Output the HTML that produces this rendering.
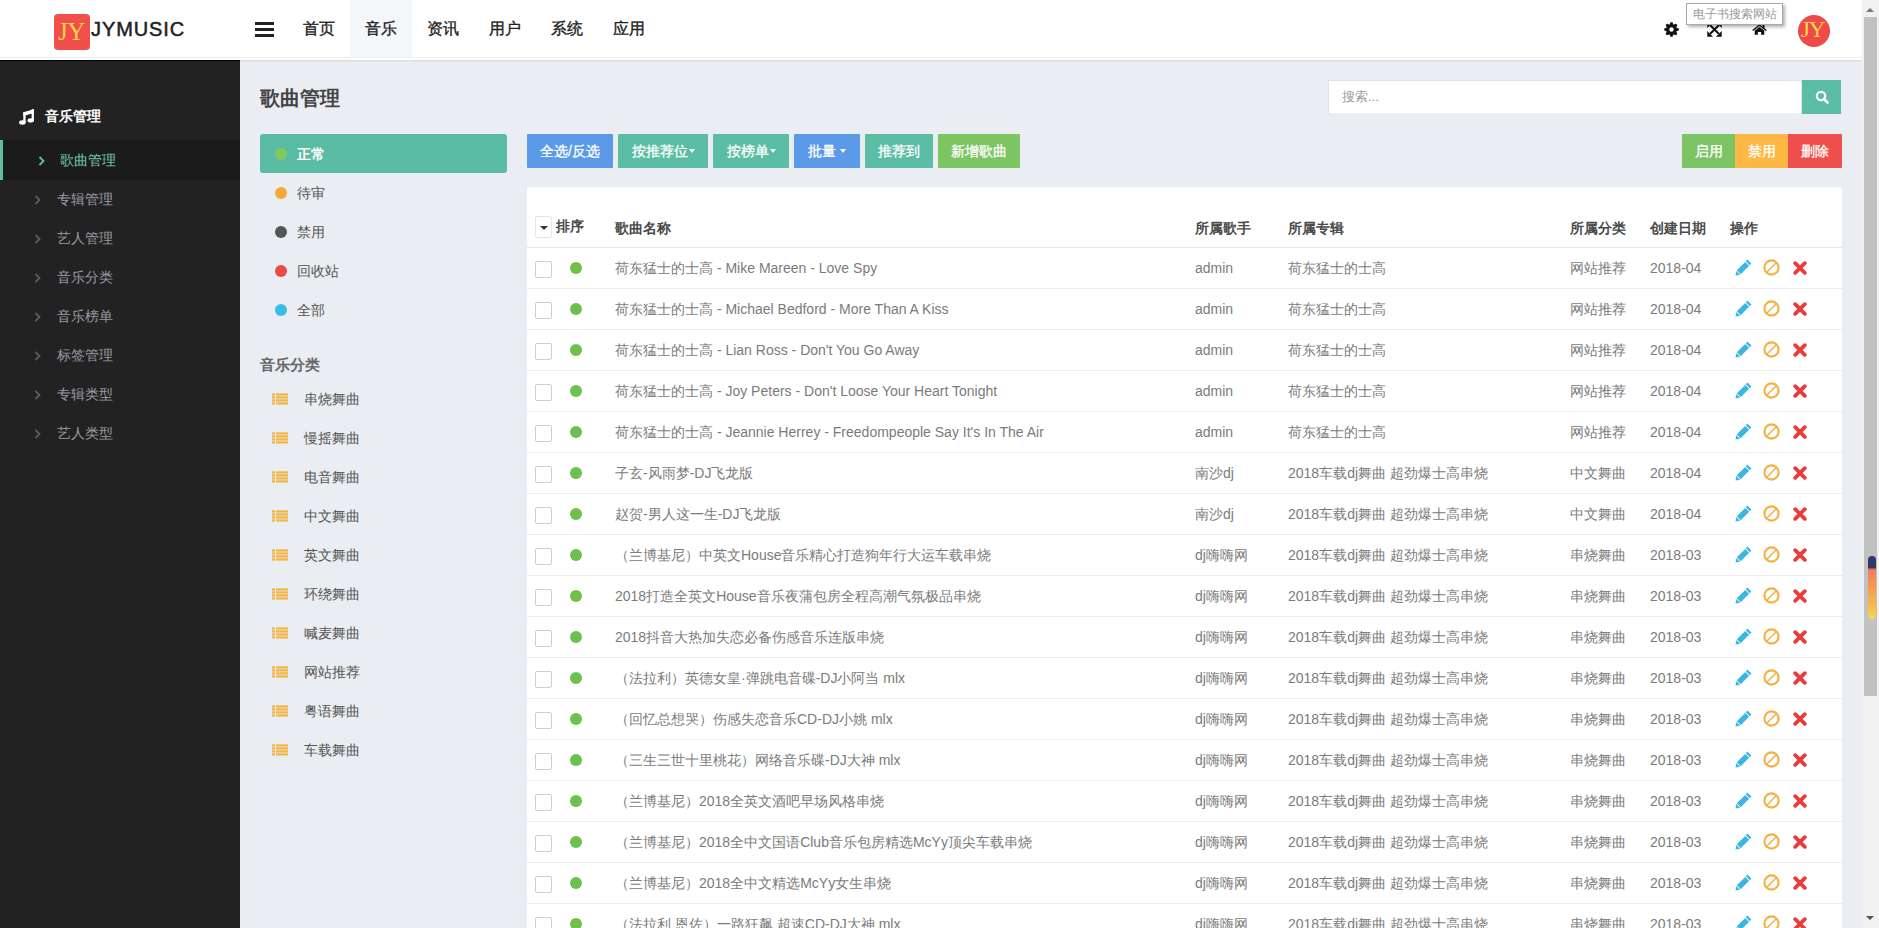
<!DOCTYPE html><html><head><meta charset="utf-8"><title>JYMUSIC</title><style>*{box-sizing:border-box;margin:0;padding:0}
html,body{width:1879px;height:928px;overflow:hidden}
body{font-family:"Liberation Sans",sans-serif;background:#eaedf1;position:relative;font-size:14px;color:#666}
#hdr{position:absolute;left:0;top:0;width:1862px;height:60px;background:#fff;z-index:2}
.hline{position:absolute;left:0;top:57px;width:1862px;height:1px;background:#efefef}
#logo{position:absolute;left:54px;top:14px;width:36px;height:36px;background:#f24f4c;border-radius:4px;overflow:hidden}
#logo span{position:absolute;left:4px;top:3px;font-family:"Liberation Serif",serif;font-size:25px;line-height:30px;color:#fdd14c;letter-spacing:-0.5px}
#brand{position:absolute;left:91px;top:18px;font-size:20px;line-height:22px;color:#222;letter-spacing:0.9px;-webkit-text-stroke:0.5px #222}
#burger{position:absolute;left:255px;top:22px;width:19px;height:15px}
#burger i{display:block;height:3px;background:#222;margin-bottom:3px}
.nav{position:absolute;top:0;height:57px;width:62px;line-height:58px;text-align:center;font-size:16px;color:#222;-webkit-text-stroke:0.35px #222}
.nav.on{background:#f4f7fa}
.ticon{position:absolute;line-height:0}
#tip{position:absolute;left:1686px;top:3px;width:97px;height:22px;border:1px solid #aaa;background:#fff;font-size:12px;line-height:20px;color:#999;text-align:center;box-shadow:2px 2px 3px rgba(0,0,0,0.3)}
#avatar{position:absolute;left:1798px;top:15px;width:32px;height:32px;border-radius:50%;background:#ef4a47;overflow:hidden}
#avatar span{position:absolute;left:3px;top:1px;font-family:"Liberation Serif",serif;font-size:23px;line-height:28px;color:#ffd550;letter-spacing:-1.2px}
#side{position:absolute;left:0;top:60px;width:240px;height:868px;background:#222}
.stop{position:absolute;left:0;top:0;width:240px;height:1px;background:#000}
#shead{position:absolute;left:19px;top:46px;height:20px;line-height:20px;color:#fff}
#shead .note{position:absolute;left:0;top:2.5px;line-height:0}
#shead b{position:absolute;left:26px;top:0;white-space:nowrap;font-size:14px}
.sitem{position:absolute;left:0;width:240px;height:39px;line-height:39px;color:#9b99a3}
.sitem.act{background:#1b1b1b;border-left:3px solid #5fbfa5;height:40px;line-height:40px;color:#6fcaae}
.sitem .chev{position:absolute;left:34px;top:15px;line-height:0}
.sitem.act .chev{left:35px;top:16px}
.sitem .stx{position:absolute;left:57px;top:0}
.sitem.act .stx{left:57px}
#title{position:absolute;left:260px;top:86px;font-size:20px;line-height:24px;color:#444;font-weight:bold}
#search{position:absolute;left:1328px;top:80px;width:474px;height:34px;background:#fff;border:1px solid #e2e2e2;border-bottom-color:#eceef1}
#search .ph{position:absolute;left:13px;top:0;line-height:32px;font-size:13px;color:#999}
#sbtn{position:absolute;left:1802px;top:80px;width:39px;height:34px;background:#5bbda4;line-height:0;padding:10px 0 0 13px}
#stact{position:absolute;left:260px;top:134px;width:247px;height:39px;background:#5bbca4;border-radius:3px}
.dot{position:absolute;left:275px;width:12px;height:12px;border-radius:50%}
.stt{position:absolute;left:297px;height:20px;line-height:20px;color:#555;font-size:14px}
.stt.on{color:#fff;font-weight:bold}
#cathead{position:absolute;left:260px;top:354px;font-size:15px;line-height:22px;color:#666;font-weight:bold}
.licon{position:absolute;left:272px;line-height:0}
.catt{position:absolute;left:304px;height:20px;line-height:20px;color:#555}
.btn{position:absolute;top:134px;height:34px;line-height:34px;text-align:center;color:#fff;font-size:14px;border-radius:1px;-webkit-text-stroke:0.3px #fff}
.g1{border-radius:1px 0 0 1px}.g2{border-radius:0}.g3{border-radius:0 1px 1px 0}
#card{position:absolute;left:527px;top:187px;width:1315px;height:800px;background:#fff;border-radius:2px}
.th{position:absolute;left:0;width:1315px;height:22px;line-height:22px;color:#4a4a4a;font-weight:bold}
.thx{position:absolute;top:0;white-space:nowrap}
.sortbox{position:absolute;left:8px;top:-1px;width:17px;height:22px;border:1px solid #e6e6e6;border-radius:2px}
.sortbox i{position:absolute;left:4px;top:9px;width:0;height:0;border-left:4px solid transparent;border-right:4px solid transparent;border-top:4px solid #333}
.hsep{position:absolute;left:0;width:1315px;height:1px;background:#e8e8e8}
.tr{position:absolute;left:0;width:1315px;height:41px;border-bottom:1px solid #ececec}
.td{position:absolute;top:0;line-height:40px;white-space:nowrap;color:#7b7b7b}
.cb{position:absolute;left:8px;top:13px;width:17px;height:17px;border:1px solid #cfcfcf;border-radius:2px;background:#fff}
.gdot{position:absolute;left:43px;top:14px;width:12px;height:12px;border-radius:50%;background:#6ebf4c}
.ic{position:absolute;line-height:0}
#sb{position:absolute;left:1862px;top:0;width:17px;height:928px;background:#f1f1f1}
#sb .thumb{position:absolute;left:2px;top:17px;width:13px;height:679px;background:#c1c1c1}
#sb .up{position:absolute;left:4px;top:8px;width:0;height:0;border-left:4px solid transparent;border-right:4px solid transparent;border-bottom:4px solid #777}
#sb .dn{position:absolute;left:4px;top:916px;width:0;height:0;border-left:4px solid transparent;border-right:4px solid transparent;border-top:4px solid #555}
#sb .widget{position:absolute;left:6px;top:556px;width:8px;height:63px;border-radius:4px;background:linear-gradient(#2b3a6a 0,#2b3a6a 18%,#f47d5a 22%,#f6c84a 90%,#f2e25a 100%)}

#hsh{position:absolute;left:240px;top:60px;width:1622px;height:1px;background:#dadcdf}
#hsh2{position:absolute;left:240px;top:61px;width:1622px;height:1px;background:#e3e6ea}

.caret{display:inline-block;width:0;height:0;border-top:4px solid #fff;border-left:3.5px solid transparent;border-right:3.5px solid transparent;vertical-align:middle;margin-top:-2px;margin-left:1px}
</style></head><body>
<div id="hdr"><div class="hline"></div>
<div id="logo"><span>JY</span></div><div id="brand">JYMUSIC</div>
<div id="burger"><i></i><i></i><i></i></div>
<div class="nav" style="left:288px">首页</div>
<div class="nav on" style="left:350px">音乐</div>
<div class="nav" style="left:412px">资讯</div>
<div class="nav" style="left:474px">用户</div>
<div class="nav" style="left:536px">系统</div>
<div class="nav" style="left:598px">应用</div>
<div class="ticon" style="left:1664px;top:21.5px"><svg width="15" height="15" viewBox="0 0 15 15"><path fill="#111" fill-rule="evenodd" d="M5.46 2.93 L6.48 0.27 L8.52 0.27 L9.54 2.93 L9.29 2.83 L11.89 1.67 L13.33 3.11 L12.17 5.71 L12.07 5.46 L14.73 6.48 L14.73 8.52 L12.07 9.54 L12.17 9.29 L13.33 11.89 L11.89 13.33 L9.29 12.17 L9.54 12.07 L8.52 14.73 L6.48 14.73 L5.46 12.07 L5.71 12.17 L3.11 13.33 L1.67 11.89 L2.83 9.29 L2.93 9.54 L0.27 8.52 L0.27 6.48 L2.93 5.46 L2.83 5.71 L1.67 3.11 L3.11 1.67 L5.71 2.83 Z M7.5 5.3 A2.2 2.2 0 1 0 7.5 9.7 A2.2 2.2 0 1 0 7.5 5.3 Z"/></svg></div>
<div class="ticon" style="left:1707px;top:21.5px"><svg width="15" height="15" viewBox="0 0 15 15"><path d="M3.2 3.2 L11.8 11.8 M11.8 3.2 L3.2 11.8" stroke="#111" stroke-width="2"/><path fill="#111" d="M0.3 0.3 H6 L0.3 6 Z M14.7 0.3 H9 L14.7 6 Z M0.3 14.7 H6 L0.3 9 Z M14.7 14.7 H9 L14.7 9 Z"/></svg></div>
<div class="ticon" style="left:1752px;top:24px"><svg width="15" height="11" viewBox="0 0 15 11"><path fill="#111" d="M7.5 0.2 L14.8 5.9 L13.8 7 L7.5 2.1 L1.2 7 L0.2 5.9 Z M2.7 6.6 L7.5 2.9 L12.3 6.6 L12.3 10.8 L9.1 10.8 L9.1 7.9 L5.9 7.9 L5.9 10.8 L2.7 10.8 Z"/><rect x="10.6" y="0.8" width="1.9" height="3.2" fill="#111"/></svg></div>
<div id="tip">电子书搜索网站</div>
<div id="avatar"><span>JY</span></div>
</div>
<div id="hsh"></div><div id="hsh2"></div>
<div id="side"><div class="stop"></div>
<div id="shead"><span class="note"><svg width="15" height="16" viewBox="0 0 15 16"><g fill="#fff"><path d="M4.3 3.2 L14.9 0.2 L14.9 4.0 L4.3 7.0 Z"/><rect x="4.3" y="3.2" width="2.3" height="10.6"/><rect x="12.6" y="0.2" width="2.3" height="11.8"/><ellipse cx="3.4" cy="13.5" rx="3.3" ry="2.2"/><ellipse cx="11.7" cy="11.4" rx="3.2" ry="2.1"/></g></svg></span><b>音乐管理</b></div>
<div class="sitem act" style="top:80px"><span class="chev"><svg width="7" height="10" viewBox="0 0 7 10"><path d="M1.5 1 L5.5 5 L1.5 9" fill="none" stroke="#5fc3a6" stroke-width="1.8"/></svg></span><span class="stx">歌曲管理</span></div>
<div class="sitem" style="top:120px"><span class="chev"><svg width="7" height="10" viewBox="0 0 7 10"><path d="M1.5 1 L5.5 5 L1.5 9" fill="none" stroke="#5c5c5c" stroke-width="1.8"/></svg></span><span class="stx">专辑管理</span></div>
<div class="sitem" style="top:159px"><span class="chev"><svg width="7" height="10" viewBox="0 0 7 10"><path d="M1.5 1 L5.5 5 L1.5 9" fill="none" stroke="#5c5c5c" stroke-width="1.8"/></svg></span><span class="stx">艺人管理</span></div>
<div class="sitem" style="top:198px"><span class="chev"><svg width="7" height="10" viewBox="0 0 7 10"><path d="M1.5 1 L5.5 5 L1.5 9" fill="none" stroke="#5c5c5c" stroke-width="1.8"/></svg></span><span class="stx">音乐分类</span></div>
<div class="sitem" style="top:237px"><span class="chev"><svg width="7" height="10" viewBox="0 0 7 10"><path d="M1.5 1 L5.5 5 L1.5 9" fill="none" stroke="#5c5c5c" stroke-width="1.8"/></svg></span><span class="stx">音乐榜单</span></div>
<div class="sitem" style="top:276px"><span class="chev"><svg width="7" height="10" viewBox="0 0 7 10"><path d="M1.5 1 L5.5 5 L1.5 9" fill="none" stroke="#5c5c5c" stroke-width="1.8"/></svg></span><span class="stx">标签管理</span></div>
<div class="sitem" style="top:315px"><span class="chev"><svg width="7" height="10" viewBox="0 0 7 10"><path d="M1.5 1 L5.5 5 L1.5 9" fill="none" stroke="#5c5c5c" stroke-width="1.8"/></svg></span><span class="stx">专辑类型</span></div>
<div class="sitem" style="top:354px"><span class="chev"><svg width="7" height="10" viewBox="0 0 7 10"><path d="M1.5 1 L5.5 5 L1.5 9" fill="none" stroke="#5c5c5c" stroke-width="1.8"/></svg></span><span class="stx">艺人类型</span></div>
</div>
<div id="title">歌曲管理</div>
<div id="search"><span class="ph">搜索...</span></div><div id="sbtn"><svg width="14" height="14" viewBox="0 0 14 14"><circle cx="6" cy="6" r="4.2" fill="none" stroke="#fff" stroke-width="2.2"/><path d="M9 9 L12.6 12.6" stroke="#fff" stroke-width="2.6" stroke-linecap="round"/></svg></div>
<div id="stact"></div>
<div class="dot" style="top:148px;background:#7fca5e"></div><div class="stt on" style="top:144px">正常</div>
<div class="dot" style="top:187px;background:#f6a937"></div><div class="stt" style="top:183px">待审</div>
<div class="dot" style="top:226px;background:#555"></div><div class="stt" style="top:222px">禁用</div>
<div class="dot" style="top:265px;background:#ed4a46"></div><div class="stt" style="top:261px">回收站</div>
<div class="dot" style="top:304px;background:#35bde6"></div><div class="stt" style="top:300px">全部</div>
<div id="cathead">音乐分类</div>
<div class="licon" style="top:393px"><svg width="16" height="12" viewBox="0 0 16 12"><g fill="#f2b549"><rect x="0" y="0.3" width="3" height="2.3"/><rect x="4" y="0.3" width="12" height="2.3"/><rect x="0" y="3.3" width="3" height="2.3"/><rect x="4" y="3.3" width="12" height="2.3"/><rect x="0" y="6.3" width="3" height="2.3"/><rect x="4" y="6.3" width="12" height="2.3"/><rect x="0" y="9.3" width="3" height="2.3"/><rect x="4" y="9.3" width="12" height="2.3"/></g></svg></div><div class="catt" style="top:389px">串烧舞曲</div>
<div class="licon" style="top:432px"><svg width="16" height="12" viewBox="0 0 16 12"><g fill="#f2b549"><rect x="0" y="0.3" width="3" height="2.3"/><rect x="4" y="0.3" width="12" height="2.3"/><rect x="0" y="3.3" width="3" height="2.3"/><rect x="4" y="3.3" width="12" height="2.3"/><rect x="0" y="6.3" width="3" height="2.3"/><rect x="4" y="6.3" width="12" height="2.3"/><rect x="0" y="9.3" width="3" height="2.3"/><rect x="4" y="9.3" width="12" height="2.3"/></g></svg></div><div class="catt" style="top:428px">慢摇舞曲</div>
<div class="licon" style="top:471px"><svg width="16" height="12" viewBox="0 0 16 12"><g fill="#f2b549"><rect x="0" y="0.3" width="3" height="2.3"/><rect x="4" y="0.3" width="12" height="2.3"/><rect x="0" y="3.3" width="3" height="2.3"/><rect x="4" y="3.3" width="12" height="2.3"/><rect x="0" y="6.3" width="3" height="2.3"/><rect x="4" y="6.3" width="12" height="2.3"/><rect x="0" y="9.3" width="3" height="2.3"/><rect x="4" y="9.3" width="12" height="2.3"/></g></svg></div><div class="catt" style="top:467px">电音舞曲</div>
<div class="licon" style="top:510px"><svg width="16" height="12" viewBox="0 0 16 12"><g fill="#f2b549"><rect x="0" y="0.3" width="3" height="2.3"/><rect x="4" y="0.3" width="12" height="2.3"/><rect x="0" y="3.3" width="3" height="2.3"/><rect x="4" y="3.3" width="12" height="2.3"/><rect x="0" y="6.3" width="3" height="2.3"/><rect x="4" y="6.3" width="12" height="2.3"/><rect x="0" y="9.3" width="3" height="2.3"/><rect x="4" y="9.3" width="12" height="2.3"/></g></svg></div><div class="catt" style="top:506px">中文舞曲</div>
<div class="licon" style="top:549px"><svg width="16" height="12" viewBox="0 0 16 12"><g fill="#f2b549"><rect x="0" y="0.3" width="3" height="2.3"/><rect x="4" y="0.3" width="12" height="2.3"/><rect x="0" y="3.3" width="3" height="2.3"/><rect x="4" y="3.3" width="12" height="2.3"/><rect x="0" y="6.3" width="3" height="2.3"/><rect x="4" y="6.3" width="12" height="2.3"/><rect x="0" y="9.3" width="3" height="2.3"/><rect x="4" y="9.3" width="12" height="2.3"/></g></svg></div><div class="catt" style="top:545px">英文舞曲</div>
<div class="licon" style="top:588px"><svg width="16" height="12" viewBox="0 0 16 12"><g fill="#f2b549"><rect x="0" y="0.3" width="3" height="2.3"/><rect x="4" y="0.3" width="12" height="2.3"/><rect x="0" y="3.3" width="3" height="2.3"/><rect x="4" y="3.3" width="12" height="2.3"/><rect x="0" y="6.3" width="3" height="2.3"/><rect x="4" y="6.3" width="12" height="2.3"/><rect x="0" y="9.3" width="3" height="2.3"/><rect x="4" y="9.3" width="12" height="2.3"/></g></svg></div><div class="catt" style="top:584px">环绕舞曲</div>
<div class="licon" style="top:627px"><svg width="16" height="12" viewBox="0 0 16 12"><g fill="#f2b549"><rect x="0" y="0.3" width="3" height="2.3"/><rect x="4" y="0.3" width="12" height="2.3"/><rect x="0" y="3.3" width="3" height="2.3"/><rect x="4" y="3.3" width="12" height="2.3"/><rect x="0" y="6.3" width="3" height="2.3"/><rect x="4" y="6.3" width="12" height="2.3"/><rect x="0" y="9.3" width="3" height="2.3"/><rect x="4" y="9.3" width="12" height="2.3"/></g></svg></div><div class="catt" style="top:623px">喊麦舞曲</div>
<div class="licon" style="top:666px"><svg width="16" height="12" viewBox="0 0 16 12"><g fill="#f2b549"><rect x="0" y="0.3" width="3" height="2.3"/><rect x="4" y="0.3" width="12" height="2.3"/><rect x="0" y="3.3" width="3" height="2.3"/><rect x="4" y="3.3" width="12" height="2.3"/><rect x="0" y="6.3" width="3" height="2.3"/><rect x="4" y="6.3" width="12" height="2.3"/><rect x="0" y="9.3" width="3" height="2.3"/><rect x="4" y="9.3" width="12" height="2.3"/></g></svg></div><div class="catt" style="top:662px">网站推荐</div>
<div class="licon" style="top:705px"><svg width="16" height="12" viewBox="0 0 16 12"><g fill="#f2b549"><rect x="0" y="0.3" width="3" height="2.3"/><rect x="4" y="0.3" width="12" height="2.3"/><rect x="0" y="3.3" width="3" height="2.3"/><rect x="4" y="3.3" width="12" height="2.3"/><rect x="0" y="6.3" width="3" height="2.3"/><rect x="4" y="6.3" width="12" height="2.3"/><rect x="0" y="9.3" width="3" height="2.3"/><rect x="4" y="9.3" width="12" height="2.3"/></g></svg></div><div class="catt" style="top:701px">粤语舞曲</div>
<div class="licon" style="top:744px"><svg width="16" height="12" viewBox="0 0 16 12"><g fill="#f2b549"><rect x="0" y="0.3" width="3" height="2.3"/><rect x="4" y="0.3" width="12" height="2.3"/><rect x="0" y="3.3" width="3" height="2.3"/><rect x="4" y="3.3" width="12" height="2.3"/><rect x="0" y="6.3" width="3" height="2.3"/><rect x="4" y="6.3" width="12" height="2.3"/><rect x="0" y="9.3" width="3" height="2.3"/><rect x="4" y="9.3" width="12" height="2.3"/></g></svg></div><div class="catt" style="top:740px">车载舞曲</div>
<div class="btn" style="left:527px;width:86px;background:#5a9ae8">全选/反选</div>
<div class="btn" style="left:618px;width:90px;background:#5bbda4">按推荐位<i class="caret"></i></div>
<div class="btn" style="left:713px;width:76px;background:#5bbda4">按榜单<i class="caret"></i></div>
<div class="btn" style="left:794px;width:66px;background:#5a9ae8">批量 <i class="caret"></i></div>
<div class="btn" style="left:865px;width:68px;background:#5bbda4">推荐到</div>
<div class="btn" style="left:938px;width:82px;background:#7dc462">新增歌曲</div>
<div class="btn g1" style="left:1682px;width:53px;background:#7cc463">启用</div>
<div class="btn g2" style="left:1735px;width:53px;background:#fdb846">禁用</div>
<div class="btn g3" style="left:1788px;width:54px;background:#ef4f4d">删除</div>
<div id="card">
<div class="th" style="top:30px"><span class="sortbox"><i></i></span><span class="thx" style="left:29px;top:-2px">排序</span><span class="thx" style="left:88px">歌曲名称</span><span class="thx" style="left:668px">所属歌手</span><span class="thx" style="left:761px">所属专辑</span><span class="thx" style="left:1043px">所属分类</span><span class="thx" style="left:1123px">创建日期</span><span class="thx" style="left:1203px">操作</span></div>
<div class="hsep" style="top:60px"></div>
<div class="tr" style="top:61px"><span class="cb"></span><span class="gdot"></span><span class="td" style="left:88px">荷东猛士的士高 - Mike Mareen - Love Spy</span><span class="td" style="left:668px">admin</span><span class="td" style="left:761px">荷东猛士的士高</span><span class="td" style="left:1043px">网站推荐</span><span class="td" style="left:1123px">2018-04</span><span class="ic" style="left:1208px;top:11px"><svg width="17" height="17" viewBox="0 0 17 17"><g fill="#3ab6e2"><path d="M12.4 0.6 L16.4 4.6 L14.8 6.2 L10.8 2.2 Z"/><path d="M10.2 2.9 L14.1 6.8 L5.7 15.2 L1.8 11.3 Z"/><path d="M1.3 11.9 L5.1 15.7 L0.5 16.5 Z"/></g></svg></span><span class="ic" style="left:1236px;top:11px"><svg width="17" height="17" viewBox="0 0 17 17"><circle cx="8.5" cy="8.5" r="7.1" fill="none" stroke="#f5b042" stroke-width="2.1"/><path d="M4.2 12.8 L12.8 4.2" stroke="#f5b042" stroke-width="1.5"/></svg></span><span class="ic" style="left:1266px;top:13px"><svg width="14" height="14" viewBox="0 0 14 14"><path d="M2.2 2.2 L11.8 11.8 M11.8 2.2 L2.2 11.8" stroke="#e83d3d" stroke-width="3.8" stroke-linecap="round"/></svg></span></div>
<div class="tr" style="top:102px"><span class="cb"></span><span class="gdot"></span><span class="td" style="left:88px">荷东猛士的士高 - Michael Bedford - More Than A Kiss</span><span class="td" style="left:668px">admin</span><span class="td" style="left:761px">荷东猛士的士高</span><span class="td" style="left:1043px">网站推荐</span><span class="td" style="left:1123px">2018-04</span><span class="ic" style="left:1208px;top:11px"><svg width="17" height="17" viewBox="0 0 17 17"><g fill="#3ab6e2"><path d="M12.4 0.6 L16.4 4.6 L14.8 6.2 L10.8 2.2 Z"/><path d="M10.2 2.9 L14.1 6.8 L5.7 15.2 L1.8 11.3 Z"/><path d="M1.3 11.9 L5.1 15.7 L0.5 16.5 Z"/></g></svg></span><span class="ic" style="left:1236px;top:11px"><svg width="17" height="17" viewBox="0 0 17 17"><circle cx="8.5" cy="8.5" r="7.1" fill="none" stroke="#f5b042" stroke-width="2.1"/><path d="M4.2 12.8 L12.8 4.2" stroke="#f5b042" stroke-width="1.5"/></svg></span><span class="ic" style="left:1266px;top:13px"><svg width="14" height="14" viewBox="0 0 14 14"><path d="M2.2 2.2 L11.8 11.8 M11.8 2.2 L2.2 11.8" stroke="#e83d3d" stroke-width="3.8" stroke-linecap="round"/></svg></span></div>
<div class="tr" style="top:143px"><span class="cb"></span><span class="gdot"></span><span class="td" style="left:88px">荷东猛士的士高 - Lian Ross - Don't You Go Away</span><span class="td" style="left:668px">admin</span><span class="td" style="left:761px">荷东猛士的士高</span><span class="td" style="left:1043px">网站推荐</span><span class="td" style="left:1123px">2018-04</span><span class="ic" style="left:1208px;top:11px"><svg width="17" height="17" viewBox="0 0 17 17"><g fill="#3ab6e2"><path d="M12.4 0.6 L16.4 4.6 L14.8 6.2 L10.8 2.2 Z"/><path d="M10.2 2.9 L14.1 6.8 L5.7 15.2 L1.8 11.3 Z"/><path d="M1.3 11.9 L5.1 15.7 L0.5 16.5 Z"/></g></svg></span><span class="ic" style="left:1236px;top:11px"><svg width="17" height="17" viewBox="0 0 17 17"><circle cx="8.5" cy="8.5" r="7.1" fill="none" stroke="#f5b042" stroke-width="2.1"/><path d="M4.2 12.8 L12.8 4.2" stroke="#f5b042" stroke-width="1.5"/></svg></span><span class="ic" style="left:1266px;top:13px"><svg width="14" height="14" viewBox="0 0 14 14"><path d="M2.2 2.2 L11.8 11.8 M11.8 2.2 L2.2 11.8" stroke="#e83d3d" stroke-width="3.8" stroke-linecap="round"/></svg></span></div>
<div class="tr" style="top:184px"><span class="cb"></span><span class="gdot"></span><span class="td" style="left:88px">荷东猛士的士高 - Joy Peters - Don't Loose Your Heart Tonight</span><span class="td" style="left:668px">admin</span><span class="td" style="left:761px">荷东猛士的士高</span><span class="td" style="left:1043px">网站推荐</span><span class="td" style="left:1123px">2018-04</span><span class="ic" style="left:1208px;top:11px"><svg width="17" height="17" viewBox="0 0 17 17"><g fill="#3ab6e2"><path d="M12.4 0.6 L16.4 4.6 L14.8 6.2 L10.8 2.2 Z"/><path d="M10.2 2.9 L14.1 6.8 L5.7 15.2 L1.8 11.3 Z"/><path d="M1.3 11.9 L5.1 15.7 L0.5 16.5 Z"/></g></svg></span><span class="ic" style="left:1236px;top:11px"><svg width="17" height="17" viewBox="0 0 17 17"><circle cx="8.5" cy="8.5" r="7.1" fill="none" stroke="#f5b042" stroke-width="2.1"/><path d="M4.2 12.8 L12.8 4.2" stroke="#f5b042" stroke-width="1.5"/></svg></span><span class="ic" style="left:1266px;top:13px"><svg width="14" height="14" viewBox="0 0 14 14"><path d="M2.2 2.2 L11.8 11.8 M11.8 2.2 L2.2 11.8" stroke="#e83d3d" stroke-width="3.8" stroke-linecap="round"/></svg></span></div>
<div class="tr" style="top:225px"><span class="cb"></span><span class="gdot"></span><span class="td" style="left:88px">荷东猛士的士高 - Jeannie Herrey - Freedompeople Say It's In The Air</span><span class="td" style="left:668px">admin</span><span class="td" style="left:761px">荷东猛士的士高</span><span class="td" style="left:1043px">网站推荐</span><span class="td" style="left:1123px">2018-04</span><span class="ic" style="left:1208px;top:11px"><svg width="17" height="17" viewBox="0 0 17 17"><g fill="#3ab6e2"><path d="M12.4 0.6 L16.4 4.6 L14.8 6.2 L10.8 2.2 Z"/><path d="M10.2 2.9 L14.1 6.8 L5.7 15.2 L1.8 11.3 Z"/><path d="M1.3 11.9 L5.1 15.7 L0.5 16.5 Z"/></g></svg></span><span class="ic" style="left:1236px;top:11px"><svg width="17" height="17" viewBox="0 0 17 17"><circle cx="8.5" cy="8.5" r="7.1" fill="none" stroke="#f5b042" stroke-width="2.1"/><path d="M4.2 12.8 L12.8 4.2" stroke="#f5b042" stroke-width="1.5"/></svg></span><span class="ic" style="left:1266px;top:13px"><svg width="14" height="14" viewBox="0 0 14 14"><path d="M2.2 2.2 L11.8 11.8 M11.8 2.2 L2.2 11.8" stroke="#e83d3d" stroke-width="3.8" stroke-linecap="round"/></svg></span></div>
<div class="tr" style="top:266px"><span class="cb"></span><span class="gdot"></span><span class="td" style="left:88px">子玄-风雨梦-DJ飞龙版</span><span class="td" style="left:668px">南沙dj</span><span class="td" style="left:761px">2018车载dj舞曲 超劲爆士高串烧</span><span class="td" style="left:1043px">中文舞曲</span><span class="td" style="left:1123px">2018-04</span><span class="ic" style="left:1208px;top:11px"><svg width="17" height="17" viewBox="0 0 17 17"><g fill="#3ab6e2"><path d="M12.4 0.6 L16.4 4.6 L14.8 6.2 L10.8 2.2 Z"/><path d="M10.2 2.9 L14.1 6.8 L5.7 15.2 L1.8 11.3 Z"/><path d="M1.3 11.9 L5.1 15.7 L0.5 16.5 Z"/></g></svg></span><span class="ic" style="left:1236px;top:11px"><svg width="17" height="17" viewBox="0 0 17 17"><circle cx="8.5" cy="8.5" r="7.1" fill="none" stroke="#f5b042" stroke-width="2.1"/><path d="M4.2 12.8 L12.8 4.2" stroke="#f5b042" stroke-width="1.5"/></svg></span><span class="ic" style="left:1266px;top:13px"><svg width="14" height="14" viewBox="0 0 14 14"><path d="M2.2 2.2 L11.8 11.8 M11.8 2.2 L2.2 11.8" stroke="#e83d3d" stroke-width="3.8" stroke-linecap="round"/></svg></span></div>
<div class="tr" style="top:307px"><span class="cb"></span><span class="gdot"></span><span class="td" style="left:88px">赵贺-男人这一生-DJ飞龙版</span><span class="td" style="left:668px">南沙dj</span><span class="td" style="left:761px">2018车载dj舞曲 超劲爆士高串烧</span><span class="td" style="left:1043px">中文舞曲</span><span class="td" style="left:1123px">2018-04</span><span class="ic" style="left:1208px;top:11px"><svg width="17" height="17" viewBox="0 0 17 17"><g fill="#3ab6e2"><path d="M12.4 0.6 L16.4 4.6 L14.8 6.2 L10.8 2.2 Z"/><path d="M10.2 2.9 L14.1 6.8 L5.7 15.2 L1.8 11.3 Z"/><path d="M1.3 11.9 L5.1 15.7 L0.5 16.5 Z"/></g></svg></span><span class="ic" style="left:1236px;top:11px"><svg width="17" height="17" viewBox="0 0 17 17"><circle cx="8.5" cy="8.5" r="7.1" fill="none" stroke="#f5b042" stroke-width="2.1"/><path d="M4.2 12.8 L12.8 4.2" stroke="#f5b042" stroke-width="1.5"/></svg></span><span class="ic" style="left:1266px;top:13px"><svg width="14" height="14" viewBox="0 0 14 14"><path d="M2.2 2.2 L11.8 11.8 M11.8 2.2 L2.2 11.8" stroke="#e83d3d" stroke-width="3.8" stroke-linecap="round"/></svg></span></div>
<div class="tr" style="top:348px"><span class="cb"></span><span class="gdot"></span><span class="td" style="left:88px">（兰博基尼）中英文House音乐精心打造狗年行大运车载串烧</span><span class="td" style="left:668px">dj嗨嗨网</span><span class="td" style="left:761px">2018车载dj舞曲 超劲爆士高串烧</span><span class="td" style="left:1043px">串烧舞曲</span><span class="td" style="left:1123px">2018-03</span><span class="ic" style="left:1208px;top:11px"><svg width="17" height="17" viewBox="0 0 17 17"><g fill="#3ab6e2"><path d="M12.4 0.6 L16.4 4.6 L14.8 6.2 L10.8 2.2 Z"/><path d="M10.2 2.9 L14.1 6.8 L5.7 15.2 L1.8 11.3 Z"/><path d="M1.3 11.9 L5.1 15.7 L0.5 16.5 Z"/></g></svg></span><span class="ic" style="left:1236px;top:11px"><svg width="17" height="17" viewBox="0 0 17 17"><circle cx="8.5" cy="8.5" r="7.1" fill="none" stroke="#f5b042" stroke-width="2.1"/><path d="M4.2 12.8 L12.8 4.2" stroke="#f5b042" stroke-width="1.5"/></svg></span><span class="ic" style="left:1266px;top:13px"><svg width="14" height="14" viewBox="0 0 14 14"><path d="M2.2 2.2 L11.8 11.8 M11.8 2.2 L2.2 11.8" stroke="#e83d3d" stroke-width="3.8" stroke-linecap="round"/></svg></span></div>
<div class="tr" style="top:389px"><span class="cb"></span><span class="gdot"></span><span class="td" style="left:88px">2018打造全英文House音乐夜蒲包房全程高潮气氛极品串烧</span><span class="td" style="left:668px">dj嗨嗨网</span><span class="td" style="left:761px">2018车载dj舞曲 超劲爆士高串烧</span><span class="td" style="left:1043px">串烧舞曲</span><span class="td" style="left:1123px">2018-03</span><span class="ic" style="left:1208px;top:11px"><svg width="17" height="17" viewBox="0 0 17 17"><g fill="#3ab6e2"><path d="M12.4 0.6 L16.4 4.6 L14.8 6.2 L10.8 2.2 Z"/><path d="M10.2 2.9 L14.1 6.8 L5.7 15.2 L1.8 11.3 Z"/><path d="M1.3 11.9 L5.1 15.7 L0.5 16.5 Z"/></g></svg></span><span class="ic" style="left:1236px;top:11px"><svg width="17" height="17" viewBox="0 0 17 17"><circle cx="8.5" cy="8.5" r="7.1" fill="none" stroke="#f5b042" stroke-width="2.1"/><path d="M4.2 12.8 L12.8 4.2" stroke="#f5b042" stroke-width="1.5"/></svg></span><span class="ic" style="left:1266px;top:13px"><svg width="14" height="14" viewBox="0 0 14 14"><path d="M2.2 2.2 L11.8 11.8 M11.8 2.2 L2.2 11.8" stroke="#e83d3d" stroke-width="3.8" stroke-linecap="round"/></svg></span></div>
<div class="tr" style="top:430px"><span class="cb"></span><span class="gdot"></span><span class="td" style="left:88px">2018抖音大热加失恋必备伤感音乐连版串烧</span><span class="td" style="left:668px">dj嗨嗨网</span><span class="td" style="left:761px">2018车载dj舞曲 超劲爆士高串烧</span><span class="td" style="left:1043px">串烧舞曲</span><span class="td" style="left:1123px">2018-03</span><span class="ic" style="left:1208px;top:11px"><svg width="17" height="17" viewBox="0 0 17 17"><g fill="#3ab6e2"><path d="M12.4 0.6 L16.4 4.6 L14.8 6.2 L10.8 2.2 Z"/><path d="M10.2 2.9 L14.1 6.8 L5.7 15.2 L1.8 11.3 Z"/><path d="M1.3 11.9 L5.1 15.7 L0.5 16.5 Z"/></g></svg></span><span class="ic" style="left:1236px;top:11px"><svg width="17" height="17" viewBox="0 0 17 17"><circle cx="8.5" cy="8.5" r="7.1" fill="none" stroke="#f5b042" stroke-width="2.1"/><path d="M4.2 12.8 L12.8 4.2" stroke="#f5b042" stroke-width="1.5"/></svg></span><span class="ic" style="left:1266px;top:13px"><svg width="14" height="14" viewBox="0 0 14 14"><path d="M2.2 2.2 L11.8 11.8 M11.8 2.2 L2.2 11.8" stroke="#e83d3d" stroke-width="3.8" stroke-linecap="round"/></svg></span></div>
<div class="tr" style="top:471px"><span class="cb"></span><span class="gdot"></span><span class="td" style="left:88px">（法拉利）英德女皇·弹跳电音碟-DJ小阿当 mlx</span><span class="td" style="left:668px">dj嗨嗨网</span><span class="td" style="left:761px">2018车载dj舞曲 超劲爆士高串烧</span><span class="td" style="left:1043px">串烧舞曲</span><span class="td" style="left:1123px">2018-03</span><span class="ic" style="left:1208px;top:11px"><svg width="17" height="17" viewBox="0 0 17 17"><g fill="#3ab6e2"><path d="M12.4 0.6 L16.4 4.6 L14.8 6.2 L10.8 2.2 Z"/><path d="M10.2 2.9 L14.1 6.8 L5.7 15.2 L1.8 11.3 Z"/><path d="M1.3 11.9 L5.1 15.7 L0.5 16.5 Z"/></g></svg></span><span class="ic" style="left:1236px;top:11px"><svg width="17" height="17" viewBox="0 0 17 17"><circle cx="8.5" cy="8.5" r="7.1" fill="none" stroke="#f5b042" stroke-width="2.1"/><path d="M4.2 12.8 L12.8 4.2" stroke="#f5b042" stroke-width="1.5"/></svg></span><span class="ic" style="left:1266px;top:13px"><svg width="14" height="14" viewBox="0 0 14 14"><path d="M2.2 2.2 L11.8 11.8 M11.8 2.2 L2.2 11.8" stroke="#e83d3d" stroke-width="3.8" stroke-linecap="round"/></svg></span></div>
<div class="tr" style="top:512px"><span class="cb"></span><span class="gdot"></span><span class="td" style="left:88px">（回忆总想哭）伤感失恋音乐CD-DJ小姚 mlx</span><span class="td" style="left:668px">dj嗨嗨网</span><span class="td" style="left:761px">2018车载dj舞曲 超劲爆士高串烧</span><span class="td" style="left:1043px">串烧舞曲</span><span class="td" style="left:1123px">2018-03</span><span class="ic" style="left:1208px;top:11px"><svg width="17" height="17" viewBox="0 0 17 17"><g fill="#3ab6e2"><path d="M12.4 0.6 L16.4 4.6 L14.8 6.2 L10.8 2.2 Z"/><path d="M10.2 2.9 L14.1 6.8 L5.7 15.2 L1.8 11.3 Z"/><path d="M1.3 11.9 L5.1 15.7 L0.5 16.5 Z"/></g></svg></span><span class="ic" style="left:1236px;top:11px"><svg width="17" height="17" viewBox="0 0 17 17"><circle cx="8.5" cy="8.5" r="7.1" fill="none" stroke="#f5b042" stroke-width="2.1"/><path d="M4.2 12.8 L12.8 4.2" stroke="#f5b042" stroke-width="1.5"/></svg></span><span class="ic" style="left:1266px;top:13px"><svg width="14" height="14" viewBox="0 0 14 14"><path d="M2.2 2.2 L11.8 11.8 M11.8 2.2 L2.2 11.8" stroke="#e83d3d" stroke-width="3.8" stroke-linecap="round"/></svg></span></div>
<div class="tr" style="top:553px"><span class="cb"></span><span class="gdot"></span><span class="td" style="left:88px">（三生三世十里桃花）网络音乐碟-DJ大神 mlx</span><span class="td" style="left:668px">dj嗨嗨网</span><span class="td" style="left:761px">2018车载dj舞曲 超劲爆士高串烧</span><span class="td" style="left:1043px">串烧舞曲</span><span class="td" style="left:1123px">2018-03</span><span class="ic" style="left:1208px;top:11px"><svg width="17" height="17" viewBox="0 0 17 17"><g fill="#3ab6e2"><path d="M12.4 0.6 L16.4 4.6 L14.8 6.2 L10.8 2.2 Z"/><path d="M10.2 2.9 L14.1 6.8 L5.7 15.2 L1.8 11.3 Z"/><path d="M1.3 11.9 L5.1 15.7 L0.5 16.5 Z"/></g></svg></span><span class="ic" style="left:1236px;top:11px"><svg width="17" height="17" viewBox="0 0 17 17"><circle cx="8.5" cy="8.5" r="7.1" fill="none" stroke="#f5b042" stroke-width="2.1"/><path d="M4.2 12.8 L12.8 4.2" stroke="#f5b042" stroke-width="1.5"/></svg></span><span class="ic" style="left:1266px;top:13px"><svg width="14" height="14" viewBox="0 0 14 14"><path d="M2.2 2.2 L11.8 11.8 M11.8 2.2 L2.2 11.8" stroke="#e83d3d" stroke-width="3.8" stroke-linecap="round"/></svg></span></div>
<div class="tr" style="top:594px"><span class="cb"></span><span class="gdot"></span><span class="td" style="left:88px">（兰博基尼）2018全英文酒吧早场风格串烧</span><span class="td" style="left:668px">dj嗨嗨网</span><span class="td" style="left:761px">2018车载dj舞曲 超劲爆士高串烧</span><span class="td" style="left:1043px">串烧舞曲</span><span class="td" style="left:1123px">2018-03</span><span class="ic" style="left:1208px;top:11px"><svg width="17" height="17" viewBox="0 0 17 17"><g fill="#3ab6e2"><path d="M12.4 0.6 L16.4 4.6 L14.8 6.2 L10.8 2.2 Z"/><path d="M10.2 2.9 L14.1 6.8 L5.7 15.2 L1.8 11.3 Z"/><path d="M1.3 11.9 L5.1 15.7 L0.5 16.5 Z"/></g></svg></span><span class="ic" style="left:1236px;top:11px"><svg width="17" height="17" viewBox="0 0 17 17"><circle cx="8.5" cy="8.5" r="7.1" fill="none" stroke="#f5b042" stroke-width="2.1"/><path d="M4.2 12.8 L12.8 4.2" stroke="#f5b042" stroke-width="1.5"/></svg></span><span class="ic" style="left:1266px;top:13px"><svg width="14" height="14" viewBox="0 0 14 14"><path d="M2.2 2.2 L11.8 11.8 M11.8 2.2 L2.2 11.8" stroke="#e83d3d" stroke-width="3.8" stroke-linecap="round"/></svg></span></div>
<div class="tr" style="top:635px"><span class="cb"></span><span class="gdot"></span><span class="td" style="left:88px">（兰博基尼）2018全中文国语Club音乐包房精选McYy顶尖车载串烧</span><span class="td" style="left:668px">dj嗨嗨网</span><span class="td" style="left:761px">2018车载dj舞曲 超劲爆士高串烧</span><span class="td" style="left:1043px">串烧舞曲</span><span class="td" style="left:1123px">2018-03</span><span class="ic" style="left:1208px;top:11px"><svg width="17" height="17" viewBox="0 0 17 17"><g fill="#3ab6e2"><path d="M12.4 0.6 L16.4 4.6 L14.8 6.2 L10.8 2.2 Z"/><path d="M10.2 2.9 L14.1 6.8 L5.7 15.2 L1.8 11.3 Z"/><path d="M1.3 11.9 L5.1 15.7 L0.5 16.5 Z"/></g></svg></span><span class="ic" style="left:1236px;top:11px"><svg width="17" height="17" viewBox="0 0 17 17"><circle cx="8.5" cy="8.5" r="7.1" fill="none" stroke="#f5b042" stroke-width="2.1"/><path d="M4.2 12.8 L12.8 4.2" stroke="#f5b042" stroke-width="1.5"/></svg></span><span class="ic" style="left:1266px;top:13px"><svg width="14" height="14" viewBox="0 0 14 14"><path d="M2.2 2.2 L11.8 11.8 M11.8 2.2 L2.2 11.8" stroke="#e83d3d" stroke-width="3.8" stroke-linecap="round"/></svg></span></div>
<div class="tr" style="top:676px"><span class="cb"></span><span class="gdot"></span><span class="td" style="left:88px">（兰博基尼）2018全中文精选McYy女生串烧</span><span class="td" style="left:668px">dj嗨嗨网</span><span class="td" style="left:761px">2018车载dj舞曲 超劲爆士高串烧</span><span class="td" style="left:1043px">串烧舞曲</span><span class="td" style="left:1123px">2018-03</span><span class="ic" style="left:1208px;top:11px"><svg width="17" height="17" viewBox="0 0 17 17"><g fill="#3ab6e2"><path d="M12.4 0.6 L16.4 4.6 L14.8 6.2 L10.8 2.2 Z"/><path d="M10.2 2.9 L14.1 6.8 L5.7 15.2 L1.8 11.3 Z"/><path d="M1.3 11.9 L5.1 15.7 L0.5 16.5 Z"/></g></svg></span><span class="ic" style="left:1236px;top:11px"><svg width="17" height="17" viewBox="0 0 17 17"><circle cx="8.5" cy="8.5" r="7.1" fill="none" stroke="#f5b042" stroke-width="2.1"/><path d="M4.2 12.8 L12.8 4.2" stroke="#f5b042" stroke-width="1.5"/></svg></span><span class="ic" style="left:1266px;top:13px"><svg width="14" height="14" viewBox="0 0 14 14"><path d="M2.2 2.2 L11.8 11.8 M11.8 2.2 L2.2 11.8" stroke="#e83d3d" stroke-width="3.8" stroke-linecap="round"/></svg></span></div>
<div class="tr" style="top:717px"><span class="cb"></span><span class="gdot"></span><span class="td" style="left:88px">（法拉利 恩佐）一路狂飙 超速CD-DJ大神 mlx</span><span class="td" style="left:668px">dj嗨嗨网</span><span class="td" style="left:761px">2018车载dj舞曲 超劲爆士高串烧</span><span class="td" style="left:1043px">串烧舞曲</span><span class="td" style="left:1123px">2018-03</span><span class="ic" style="left:1208px;top:11px"><svg width="17" height="17" viewBox="0 0 17 17"><g fill="#3ab6e2"><path d="M12.4 0.6 L16.4 4.6 L14.8 6.2 L10.8 2.2 Z"/><path d="M10.2 2.9 L14.1 6.8 L5.7 15.2 L1.8 11.3 Z"/><path d="M1.3 11.9 L5.1 15.7 L0.5 16.5 Z"/></g></svg></span><span class="ic" style="left:1236px;top:11px"><svg width="17" height="17" viewBox="0 0 17 17"><circle cx="8.5" cy="8.5" r="7.1" fill="none" stroke="#f5b042" stroke-width="2.1"/><path d="M4.2 12.8 L12.8 4.2" stroke="#f5b042" stroke-width="1.5"/></svg></span><span class="ic" style="left:1266px;top:13px"><svg width="14" height="14" viewBox="0 0 14 14"><path d="M2.2 2.2 L11.8 11.8 M11.8 2.2 L2.2 11.8" stroke="#e83d3d" stroke-width="3.8" stroke-linecap="round"/></svg></span></div>
</div>
<div id="sb"><div class="up"></div><div class="thumb"></div><div class="dn"></div><div class="widget"></div></div>
</body></html>
